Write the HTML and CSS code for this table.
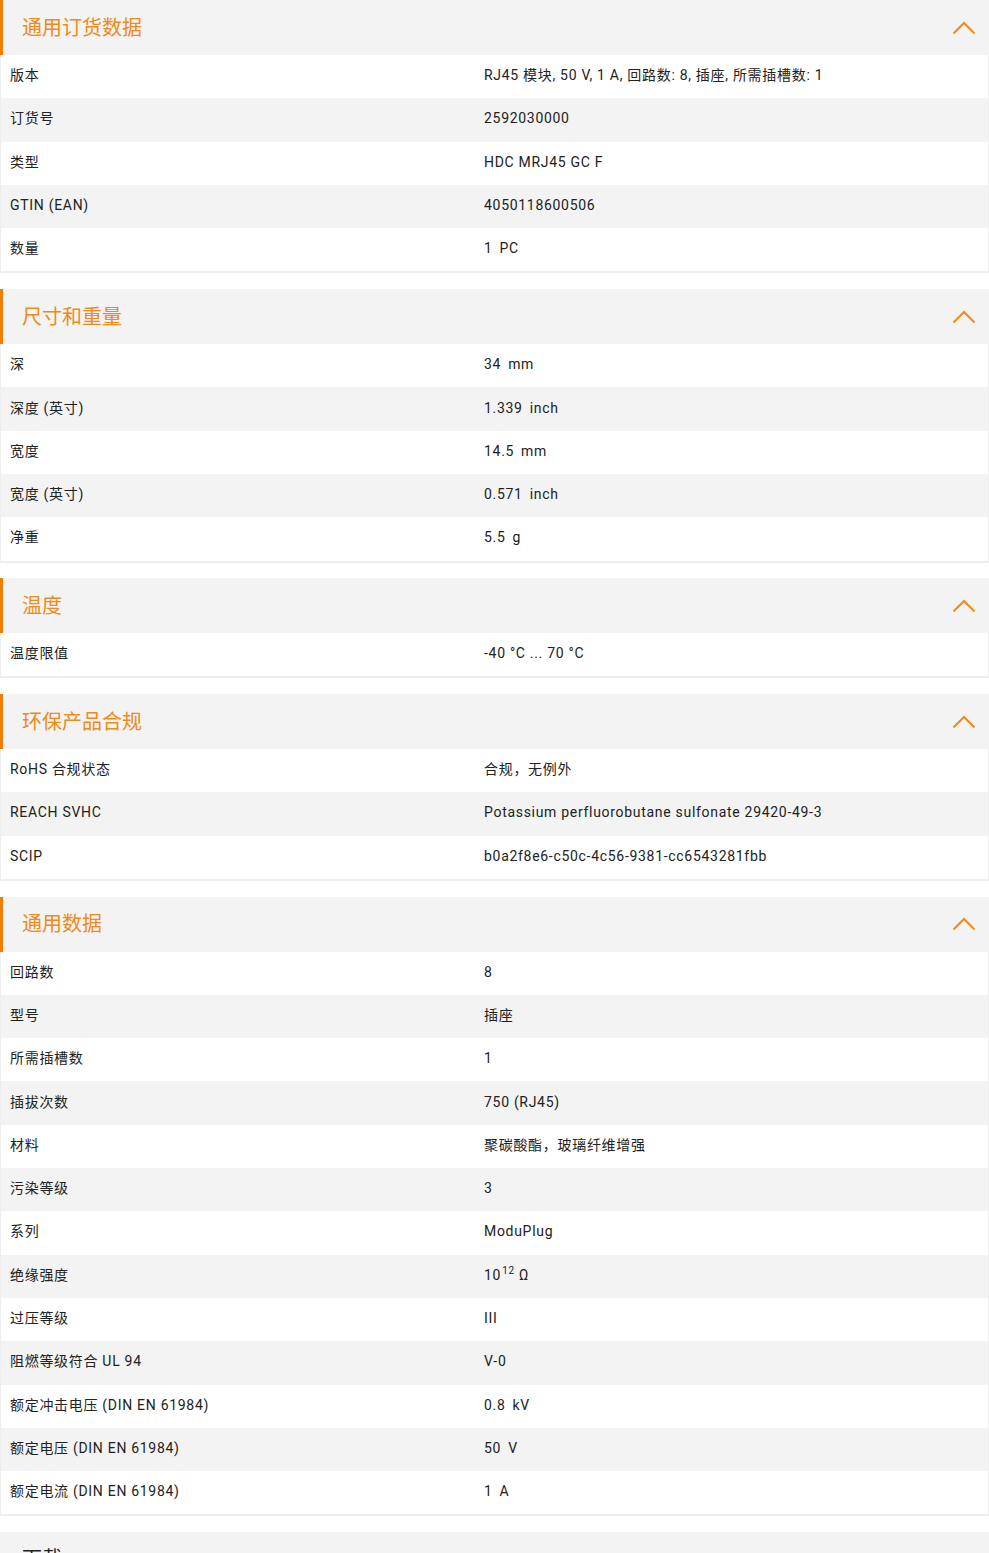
FILE: index.html
```html
<!DOCTYPE html>
<html lang="zh">
<head>
<meta charset="utf-8">
<link rel="stylesheet" href="styles.css">
</head>
<body>
<div class="page">

<section class="sec open">
  <div class="sec-head"><h2>通用订货数据</h2><svg class="chev" viewBox="0 0 24 14"><polyline points="1.5,12.5 12,2 22.5,12.5"/></svg></div>
  <div class="rows">
    <div class="row"><div class="k">版本</div><div class="v">RJ45 模块, 50 V, 1 A, 回路数: 8, 插座, 所需插槽数: 1</div></div>
    <div class="row"><div class="k">订货号</div><div class="v">2592030000</div></div>
    <div class="row"><div class="k">类型</div><div class="v">HDC MRJ45 GC F</div></div>
    <div class="row"><div class="k">GTIN (EAN)</div><div class="v">4050118600506</div></div>
    <div class="row"><div class="k">数量</div><div class="v">1<span class="u">PC</span></div></div>
  </div>
</section>

<section class="sec open">
  <div class="sec-head"><h2>尺寸和重量</h2><svg class="chev" viewBox="0 0 24 14"><polyline points="1.5,12.5 12,2 22.5,12.5"/></svg></div>
  <div class="rows">
    <div class="row"><div class="k">深</div><div class="v">34<span class="u">mm</span></div></div>
    <div class="row"><div class="k">深度 (英寸)</div><div class="v">1.339<span class="u">inch</span></div></div>
    <div class="row"><div class="k">宽度</div><div class="v">14.5<span class="u">mm</span></div></div>
    <div class="row"><div class="k">宽度 (英寸)</div><div class="v">0.571<span class="u">inch</span></div></div>
    <div class="row"><div class="k">净重</div><div class="v">5.5<span class="u">g</span></div></div>
  </div>
</section>

<section class="sec open">
  <div class="sec-head"><h2>温度</h2><svg class="chev" viewBox="0 0 24 14"><polyline points="1.5,12.5 12,2 22.5,12.5"/></svg></div>
  <div class="rows">
    <div class="row"><div class="k">温度限值</div><div class="v">-40 °C ... 70 °C</div></div>
  </div>
</section>

<section class="sec open">
  <div class="sec-head"><h2>环保产品合规</h2><svg class="chev" viewBox="0 0 24 14"><polyline points="1.5,12.5 12,2 22.5,12.5"/></svg></div>
  <div class="rows">
    <div class="row"><div class="k">RoHS 合规状态</div><div class="v">合规，无例外</div></div>
    <div class="row"><div class="k">REACH SVHC</div><div class="v">Potassium perfluorobutane sulfonate 29420-49-3</div></div>
    <div class="row"><div class="k">SCIP</div><div class="v">b0a2f8e6-c50c-4c56-9381-cc6543281fbb</div></div>
  </div>
</section>

<section class="sec open">
  <div class="sec-head"><h2>通用数据</h2><svg class="chev" viewBox="0 0 24 14"><polyline points="1.5,12.5 12,2 22.5,12.5"/></svg></div>
  <div class="rows">
    <div class="row"><div class="k">回路数</div><div class="v">8</div></div>
    <div class="row"><div class="k">型号</div><div class="v">插座</div></div>
    <div class="row"><div class="k">所需插槽数</div><div class="v">1</div></div>
    <div class="row"><div class="k">插拔次数</div><div class="v">750 (RJ45)</div></div>
    <div class="row"><div class="k">材料</div><div class="v">聚碳酸酯，玻璃纤维增强</div></div>
    <div class="row"><div class="k">污染等级</div><div class="v">3</div></div>
    <div class="row"><div class="k">系列</div><div class="v">ModuPlug</div></div>
    <div class="row"><div class="k">绝缘强度</div><div class="v">10<sup>12</sup> Ω</div></div>
    <div class="row"><div class="k">过压等级</div><div class="v">III</div></div>
    <div class="row"><div class="k">阻燃等级符合 UL 94</div><div class="v">V-0</div></div>
    <div class="row"><div class="k">额定冲击电压 (DIN EN 61984)</div><div class="v">0.8<span class="u">kV</span></div></div>
    <div class="row"><div class="k">额定电压 (DIN EN 61984)</div><div class="v">50<span class="u">V</span></div></div>
    <div class="row"><div class="k">额定电流 (DIN EN 61984)</div><div class="v">1<span class="u">A</span></div></div>
  </div>
</section>

<section class="sec closed">
  <div class="sec-head"><h2>下载</h2></div>
</section>

</div>
</body>
</html>
```
FILE: styles.css
```css
html, body {
  margin: 0;
  padding: 0;
  background: #ffffff;
}
body {
  font-family: Roboto, "Noto Sans CJK SC", sans-serif;
  color: #222;
}
.page {
  width: 989px;
}
.sec {
  margin-bottom: 15.6px;
}
.sec-head {
  height: 55px;
  background: #f3f3f3;
  display: flex;
  align-items: center;
  justify-content: space-between;
  padding: 0 13px 2px 22px;
  box-sizing: border-box;
}
.sec.open .sec-head {
  border-left: 3px solid #f07d00;
  padding-left: 19px;
}
.sec-head h2 {
  margin: 0;
  font-family: "Noto Sans CJK SC", sans-serif;
  font-weight: 400;
  font-size: 20px;
  line-height: 28px;
  color: #f08a1a;
}
.sec.closed .sec-head h2 {
  color: #222;
}
.chev {
  width: 24px;
  height: 14px;
  fill: none;
  stroke: #f08a1a;
  stroke-width: 2;
  margin-top: 2px;
}
.rows {
  border: 1px solid #eeeeee;
  border-top: none;
  border-bottom-width: 2px;
}
.row {
  display: grid;
  grid-template-columns: 474px 1fr;
  height: 43.3px;
  box-sizing: border-box;
  padding-bottom: 3px;
  align-items: center;
  font-size: 14px;
  line-height: 20px;
  letter-spacing: 0.7px;
}
.row:nth-child(even) {
  background: #f3f3f3;
}
.k {
  padding-left: 9px;
}
.v {
  padding-left: 9px;
}
.u {
  margin-left: 7px;
}
sup {
  font-size: 10px;
  line-height: 0;
  vertical-align: 0;
  position: relative;
  top: -6px;
  margin-left: 1px;
}
```
